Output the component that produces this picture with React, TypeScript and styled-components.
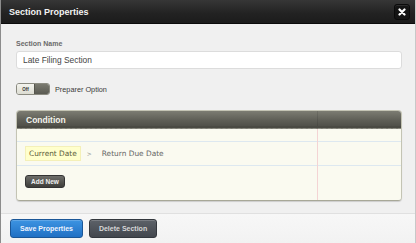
import React from "react";
import styled, { createGlobalStyle } from "styled-components";

const Global = createGlobalStyle`
  html, body {
    margin: 0;
    padding: 0;
    background: #f1f1f1;
  }
  * {
    box-sizing: border-box;
  }
`;

const Dialog = styled.div`
  width: 416px;
  height: 243px;
  display: flex;
  flex-direction: column;
  background: #f0f0f0;
  border-left: 1px solid #8c8c8c;
  border-right: 1px solid #c8c8c8;
  font-family: "Liberation Sans", Arial, sans-serif;
  overflow: hidden;
`;

const Header = styled.div`
  height: 24px;
  flex: none;
  display: flex;
  align-items: center;
  justify-content: space-between;
  padding: 0 5px 0 8px;
  background: linear-gradient(#363636, #222 60%, #1c1c1c);
  border-bottom: 1px solid #0c0c0c;
`;

const Title = styled.h1`
  margin: 0;
  font-size: 9px;
  font-weight: bold;
  color: #f2f2f2;
`;

const CloseButton = styled.button`
  width: 16px;
  height: 16px;
  margin-top: 1px;
  padding: 0;
  border: 1px solid #0a0a0a;
  border-radius: 3px;
  background: #141414;
  display: flex;
  align-items: center;
  justify-content: center;
  box-shadow: inset 0 1px 0 #2c2c2c;
`;

const Body = styled.div`
  flex: 1;
  display: flex;
  flex-direction: column;
  padding: 15px 13px 0 15px;
`;

const Label = styled.label`
  font-size: 7px;
  font-weight: bold;
  line-height: 10px;
  color: #6a6a6a;
`;

const Input = styled.div`
  margin-top: 2px;
  height: 18px;
  display: flex;
  align-items: center;
  padding-left: 6px;
  background: #fff;
  border: 1px solid #dcdcdc;
  border-radius: 3px;
  font-size: 8.4px;
  color: #444;
`;

const ToggleRow = styled.div`
  margin-top: 14px;
  height: 12px;
  display: flex;
  align-items: center;
  gap: 5px;
`;

const Toggle = styled.div`
  width: 34px;
  height: 12px;
  display: flex;
  border: 1px solid #8a8a80;
  border-radius: 3px;
  overflow: hidden;
`;

const ToggleOff = styled.span`
  width: 17px;
  display: flex;
  align-items: center;
  justify-content: center;
  background: linear-gradient(#f4f4ee, #dcdcd2);
  font-size: 4.5px;
  font-weight: bold;
  color: #333;
`;

const ToggleKnob = styled.span`
  flex: 1;
  background: linear-gradient(#7a7a70, #5a5a52);
  border-left: 1px solid #55554d;
`;

const ToggleText = styled.span`
  font-size: 7.3px;
  color: #3a3a3a;
`;

const Panel = styled.div`
  margin-top: 15px;
  height: 91px;
  display: flex;
  flex-direction: column;
  border: 1px solid #c4c4b4;
  border-bottom-color: #a8a898;
  border-radius: 4px;
  overflow: hidden;
  box-shadow: 0 1px 1px rgba(0, 0, 0, 0.15);
`;

const PanelHeader = styled.div`
  height: 18px;
  flex: none;
  display: flex;
  align-items: center;
  padding-left: 9px;
  background:
    linear-gradient(90deg, transparent 300px, rgba(0, 0, 0, 0.1) 300px, rgba(0, 0, 0, 0.1) 301px, transparent 301px),
    linear-gradient(#7c7c72, #5e5e56 55%, #4c4c45);
  border-bottom: 1px dashed #8a8a80;
  box-shadow: inset 0 -2px 0 #4a4a43;
`;

const PanelTitle = styled.span`
  font-size: 8.5px;
  font-weight: bold;
  color: #f4f4ec;
`;

const PanelBody = styled.div`
  flex: 1;
  display: flex;
  flex-direction: column;
  align-items: flex-start;
  padding: 17px 0 0 8px;
  background:
    linear-gradient(90deg, transparent 300px, #f4d4d4 300px, #f4d4d4 301px, transparent 301px),
    linear-gradient(transparent 12px, #dde8f0 12px, #dde8f0 13px, transparent 13px, transparent 36px, #dde8f0 36px, #dde8f0 37px, transparent 37px),
    #fafaf0;
`;

const ConditionRow = styled.div`
  display: flex;
  align-items: center;
  gap: 6px;
  font-family: "DejaVu Sans", sans-serif;
  font-size: 7.4px;
  color: #666;
`;

const Field = styled.span<{ $highlight?: boolean }>`
  padding: 2px 3px;
  background: ${(p) => (p.$highlight ? "#ffffcc" : "transparent")};
  border: 1px solid ${(p) => (p.$highlight ? "#f4f0b8" : "transparent")};
  color: ${(p) => (p.$highlight ? "#5c5c3a" : "#666")};
`;

const Arrow = styled.span`
  font-size: 6px;
  color: #888;
`;

const SmallButton = styled.button`
  margin-top: 14px;
  height: 13px;
  padding: 0 5px;
  border: 1px solid #333;
  border-radius: 3px;
  background: linear-gradient(#6e6e6a, #3e3e3a);
  color: #eee;
  font-family: "Liberation Sans", Arial, sans-serif;
  font-size: 6.5px;
  font-weight: bold;
`;

const Footer = styled.div`
  height: 30px;
  flex: none;
  display: flex;
  gap: 6px;
  padding: 5px 0 0 9px;
  border-top: 1px solid #e0e0e0;
  background: linear-gradient(#f7f7f7, #f2f2f2);
`;

const Button = styled.button<{ $variant: "primary" | "dark" }>`
  height: 19px;
  padding: 0 9px;
  border-radius: 3px;
  border: 1px solid ${(p) => (p.$variant === "primary" ? "#1a5697" : "#33373d")};
  background: ${(p) =>
    p.$variant === "primary"
      ? "linear-gradient(#3d94e2, #2070c4)"
      : "linear-gradient(#5c6168, #43474e)"};
  color: ${(p) => (p.$variant === "primary" ? "#eef4ff" : "#d8d8d8")};
  font-family: "Liberation Sans", Arial, sans-serif;
  font-size: 7px;
  font-weight: bold;
  box-shadow: inset 0 1px 0 rgba(255, 255, 255, 0.18);
`;

export default function App() {
  return (
    <>
      <Global />
      <Dialog>
        <Header>
          <Title>Section Properties</Title>
          <CloseButton aria-label="Close">
            <svg width="8" height="8" viewBox="0 0 8 8">
              <path d="M1.5 1.5 L6.5 6.5 M6.5 1.5 L1.5 6.5" stroke="#fff" strokeWidth="2.2" strokeLinecap="round" />
            </svg>
          </CloseButton>
        </Header>
        <Body>
          <Label>Section Name</Label>
          <Input>Late Filing Section</Input>
          <ToggleRow>
            <Toggle>
              <ToggleOff>Off</ToggleOff>
              <ToggleKnob />
            </Toggle>
            <ToggleText>Preparer Option</ToggleText>
          </ToggleRow>
          <Panel>
            <PanelHeader>
              <PanelTitle>Condition</PanelTitle>
            </PanelHeader>
            <PanelBody>
              <ConditionRow>
                <Field $highlight>Current Date</Field>
                <Arrow>&gt;</Arrow>
                <Field>Return Due Date</Field>
              </ConditionRow>
              <SmallButton>Add New</SmallButton>
            </PanelBody>
          </Panel>
        </Body>
        <Footer>
          <Button $variant="primary">Save Properties</Button>
          <Button $variant="dark">Delete Section</Button>
        </Footer>
      </Dialog>
    </>
  );
}
